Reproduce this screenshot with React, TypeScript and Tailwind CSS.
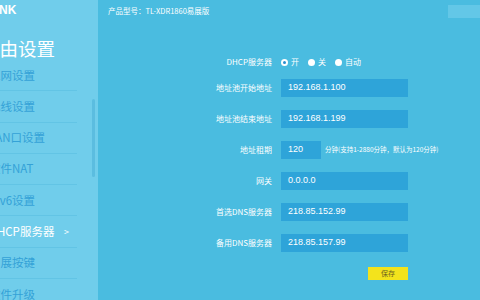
const menu = ['上网设置', '无线设置', 'LAN口设置', '软件NAT', 'IPv6设置', 'DHCP服务器', '易展按键', '软件升级'];

const fields = [
  { label: '地址池开始地址', value: '192.168.1.100' },
  { label: '地址池结束地址', value: '192.168.1.199' },
  { label: '地址租期', value: '120', short: true },
  { label: '网关', value: '0.0.0.0' },
  { label: '首选DNS服务器', value: '218.85.152.99' },
  { label: '备用DNS服务器', value: '218.85.157.99' },
];

const font = { fontFamily: '"Noto Sans CJK SC", "Liberation Sans", sans-serif' };
const narrow = { fontFamily: '"Liberation Sans Narrow", "Noto Sans CJK SC", sans-serif' };

function Radio({ checked, text }: { checked?: boolean; text: string }) {
  return (
    <div className="flex items-center gap-[3px]">
      {checked ? (
        <span className="flex h-[7px] w-[7px] items-center justify-center rounded-full bg-white">
          <span className="h-[3px] w-[3px] rounded-full bg-[#2a8fd0]" />
        </span>
      ) : (
        <span className="h-[7px] w-[7px] rounded-full bg-white" />
      )}
      <span className="text-[8px] text-white">{text}</span>
    </div>
  );
}

export default function App() {
  return (
    <div className="flex h-[300px] w-[480px] overflow-hidden bg-[#4abce0]" style={font}>
      {/* sidebar */}
      <aside className="relative flex w-[98px] shrink-0 flex-col overflow-hidden bg-[#70cdeb]">
        <div className="ml-[-31px] mt-[3px] h-[14px] text-[12px] font-bold leading-[14px] text-white" style={{ fontFamily: '"Liberation Sans", sans-serif' }}>
          TP-LINK
        </div>
        <div className="ml-[-19px] mt-[18px] whitespace-nowrap text-[18.5px] leading-[26px] text-white">路由设置</div>
        <ul className="mt-[-1px] w-[77px]" style={narrow}>
          {menu.map((m, i) => (
            <li
              key={m}
              className={`flex h-[31.3px] items-center justify-between whitespace-nowrap border-b border-[#62c4e5] pr-[8px] text-[11.5px] ${
                i === 5 ? 'text-white' : 'text-[#34a2d7]'
              } ${i === 7 ? 'border-b-0' : ''}`}
            >
              <span className="ml-[-11px]">{m}</span>
              {i === 5 && <span className="text-[9px]">&gt;</span>}
            </li>
          ))}
        </ul>
        <div className="absolute left-[92px] top-[99px] h-[78px] w-[3px] rounded bg-[#5bbde0]" />
      </aside>

      {/* main */}
      <main className="relative flex flex-1 flex-col">
        <div className="ml-[10px] mt-[5px] h-[11px] text-[7.5px] leading-[11px] text-white">产品型号：TL-XDR1860易展版</div>
        <div className="absolute right-0 top-[5px] h-[13px] w-[32px] bg-[#63c7e7]" />

        <div className="mt-[37px] flex h-[18px] items-center">
          <div className="w-[174px] text-right text-[8px] text-white">DHCP服务器</div>
          <div className="ml-[9px] flex items-center gap-[9px]">
            <Radio checked text="开" />
            <Radio text="关" />
            <Radio text="自动" />
          </div>
        </div>

        <div className="mt-[8px] flex flex-col gap-[13px]">
          {fields.map((f) => (
            <div key={f.label} className="flex h-[18px] items-center">
              <div className="w-[174px] text-right text-[8px] text-white">{f.label}</div>
              <div
                className={`ml-[9px] flex h-[18px] items-center bg-[#2ea4d9] pl-[7px] text-[9px] text-white ${
                  f.short ? 'w-[40px]' : 'w-[127px]'
                }`}
                style={{ fontFamily: '"Liberation Sans", sans-serif' }}
              >
                {f.value}
              </div>
              {f.short && (
                <span className="ml-[4px] whitespace-nowrap text-[6.5px] text-white">分钟(支持1-2880分钟，默认为120分钟)</span>
              )}
            </div>
          ))}
        </div>

        <div className="mt-[15px] flex w-[310px] justify-end">
          <button className="flex h-[13px] w-[40px] items-center justify-center bg-[#f3e31c] text-[7px] text-[#6b6420]">保存</button>
        </div>
      </main>
    </div>
  );
}
